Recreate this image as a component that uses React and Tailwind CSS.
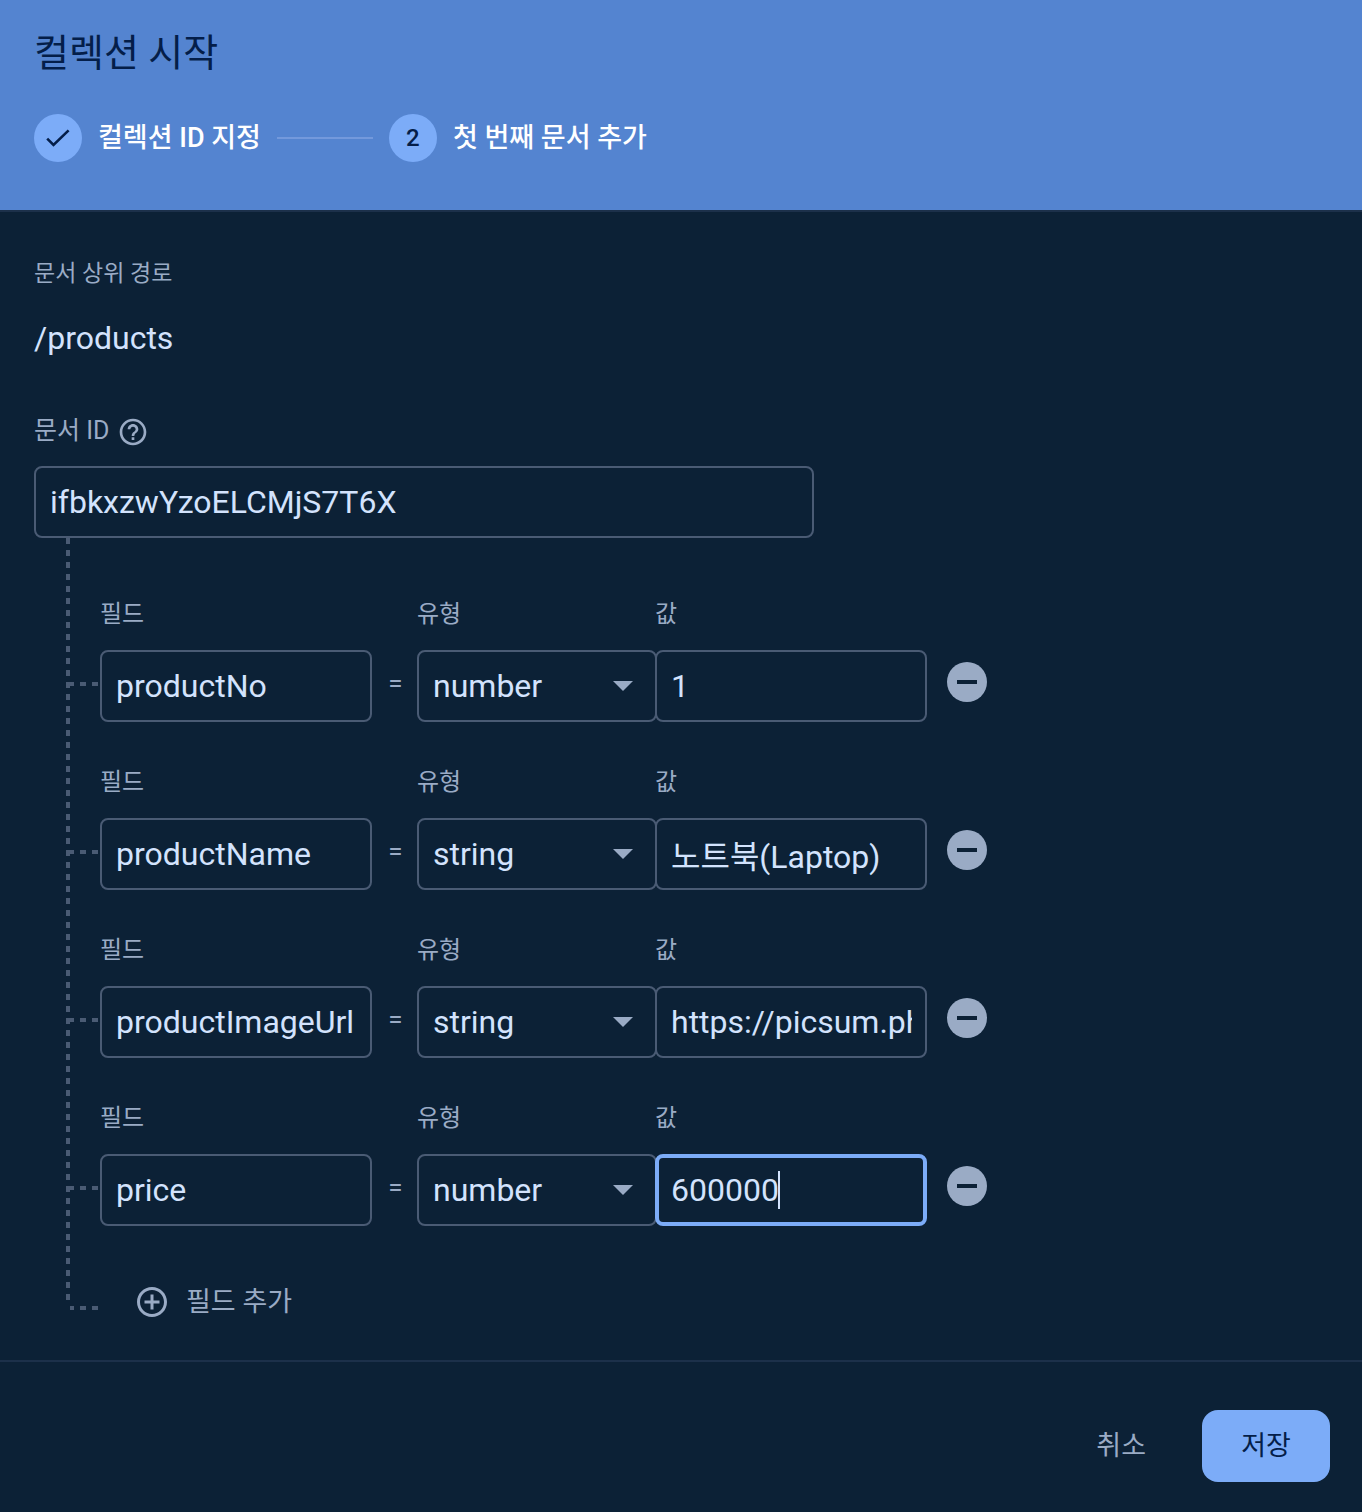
import React, { useState } from 'react';

const initialFields = [
    { id: 1, name: 'productNo', type: 'number', value: '1' },
    { id: 2, name: 'productName', type: 'string', value: '노트북(Laptop)' },
    { id: 3, name: 'productImageUrl', type: 'string', value: 'https://picsum.photos/200' },
    { id: 4, name: 'price', type: 'number', value: '600000', active: true },
];

const fieldTypes = ['string', 'number', 'boolean', 'map', 'array', 'null', 'timestamp', 'geopoint', 'reference'];

const inputBase = 'block h-[72px] w-full rounded-lg bg-transparent text-[32px] leading-[64px] text-[#d3e3fd] outline-none';

const Branch = () => (
    <div className="h-1 w-7 bg-[repeating-linear-gradient(to_right,#4a5b74_0px,#4a5b74_4px,transparent_4px,transparent_10px,#4a5b74_10px,#4a5b74_12px)]"></div>
);

const StepBadge = ({ children }) => (
    <span className="flex h-12 w-12 shrink-0 items-center justify-center rounded-full bg-[#7cacf8] text-2xl font-medium text-[#041e49]">
        {children}
    </span>
);

const FieldRow = ({ field, onChange, onRemove }) => {
    const nameId = `field-name-${field.id}`;
    const typeId = `field-type-${field.id}`;
    const valueId = `field-value-${field.id}`;

    return (
        <div className="grid grid-cols-[30px_minmax(0,272px)_45px_minmax(0,238px)_minmax(0,272px)_60px] items-start gap-y-5">
            {/* Labels */}
            <label htmlFor={nameId} className="col-start-2 text-2xl leading-8">필드</label>
            <label htmlFor={typeId} className="col-start-4 text-2xl leading-8">유형</label>
            <label htmlFor={valueId} className="col-start-5 text-2xl leading-8">값</label>

            {/* Controls */}
            <div className="col-start-1 flex h-[68px] items-center">
                <Branch />
            </div>
            <input
                id={nameId}
                type="text"
                value={field.name}
                onChange={(e) => onChange(field.id, { name: e.target.value })}
                className={`${inputBase} border-2 border-[#4a5b74] px-3.5`}
            />
            <span className="flex h-[66px] items-center justify-center pl-0.5 text-[26px]">=</span>
            <div className="relative -mr-0.5">
                <select
                    id={typeId}
                    value={field.type}
                    onChange={(e) => onChange(field.id, { type: e.target.value })}
                    className={`${inputBase} appearance-none border-2 border-[#4a5b74] px-3.5`}
                >
                    {fieldTypes.map((type) => (
                        <option key={type} value={type} className="bg-[#0c2136]">{type}</option>
                    ))}
                </select>
                <svg viewBox="0 0 20 10" className="pointer-events-none absolute top-[31px] right-6 h-2.5 w-5 fill-[#9aabc5]" aria-hidden="true">
                    <path d="M0 0h20L10 10z" />
                </svg>
            </div>
            <div className="relative">
                <input
                    id={valueId}
                    type="text"
                    value={field.value}
                    onChange={(e) => onChange(field.id, { value: e.target.value })}
                    className={`${inputBase} ${field.active ? 'border-4 border-[#7cacf8] px-3 caret-transparent' : 'border-2 border-[#4a5b74] pr-[13px] pl-3.5'}`}
                />
                {field.active && <span className="absolute top-[17px] left-[123px] h-[38px] w-0.5 bg-[#d3e3fd]"></span>}
            </div>
            <button type="button" onClick={() => onRemove(field.id)} aria-label="필드 삭제" className="flex h-16 items-center justify-end">
                <svg viewBox="0 0 40 40" className="h-10 w-10" aria-hidden="true">
                    <circle cx="20" cy="20" r="20" fill="#9aabc5" />
                    <path d="M10 18h20v4H10z" fill="#0c2136" />
                </svg>
            </button>
        </div>
    );
};

const App = () => {
    const [documentId, setDocumentId] = useState('ifbkxzwYzoELCMjS7T6X');
    const [fields, setFields] = useState(initialFields);

    const handleChange = (id, patch) => {
        setFields(fields.map((field) => (field.id === id ? { ...field, ...patch } : field)));
    };

    const handleRemove = (id) => {
        setFields(fields.filter((field) => field.id !== id));
    };

    const handleAdd = () => {
        setFields([...fields, { id: Date.now(), name: '', type: 'string', value: '' }]);
    };

    return (
        <div className="flex min-h-screen flex-col bg-[#0c2136] font-[Roboto,'Noto_Sans_CJK_KR',sans-serif] text-[#9aabc5]">

            {/* Header with stepper */}
            <header className="border-b-2 border-[#1c304a] bg-[#5484d0] bg-clip-padding px-[34px] pt-[25px] pb-12">
                <h1 className="text-[38px] leading-[56px] text-[#041e49]">컬렉션 시작</h1>
                <ol className="mt-[33px] flex items-center gap-4 text-[27px] leading-[48px] font-medium text-white">
                    <li className="flex items-center gap-4">
                        <StepBadge>
                            <svg viewBox="0 0 24 18" className="h-[18px] w-6" fill="none" stroke="currentColor" strokeWidth="2.6" aria-hidden="true">
                                <path d="M1.2 9.6l6.3 6.3L22.6 1.4" />
                            </svg>
                        </StepBadge>
                        컬렉션 ID 지정
                    </li>
                    <li className="h-0.5 w-24 bg-[#7399dc]" aria-hidden="true"></li>
                    <li className="flex items-center gap-4">
                        <StepBadge>2</StepBadge>
                        첫 번째 문서 추가
                    </li>
                </ol>
            </header>

            {/* Document form */}
            <main className="flex-1 px-[34px] pt-[46px] pb-9">
                <p className="text-[23px] leading-8">문서 상위 경로</p>
                <p className="mt-7 text-[32px] leading-10 text-[#d3e3fd]">/products</p>

                <div className="mt-14 flex items-center gap-2">
                    <label htmlFor="document-id" className="text-[25px] leading-8">문서 ID</label>
                    <svg viewBox="0 0 24 24" className="mt-0.5 h-8 w-8 fill-current" aria-hidden="true">
                        <path d="M11 18h2v-2h-2v2zm1-16C6.48 2 2 6.48 2 12s4.48 10 10 10 10-4.48 10-10S17.52 2 12 2zm0 18c-4.41 0-8-3.59-8-8s3.59-8 8-8 8 3.59 8 8-3.59 8-8 8zm0-14c-2.21 0-4 1.79-4 4h2c0-1.1.9-2 2-2s2 .9 2 2c0 2-3 1.75-3 5h2c0-2.25 3-2.5 3-5 0-2.21-1.79-4-4-4z" />
                    </svg>
                </div>
                <input
                    id="document-id"
                    type="text"
                    value={documentId}
                    onChange={(e) => setDocumentId(e.target.value)}
                    className={`${inputBase} mt-[18px] max-w-[780px] border-2 border-[#4a5b74] px-3.5`}
                />

                <div className="ml-8 flex">
                    {/* Trunk of the field tree */}
                    <div className="mb-[22px] w-1 shrink-0 bg-[repeating-linear-gradient(to_bottom,#4a5b74_0px,#4a5b74_6px,transparent_6px,transparent_12px)]"></div>
                    <div className="flex min-w-0 flex-1 flex-col gap-11 pt-[60px]">
                        {fields.map((field) => (
                            <FieldRow key={field.id} field={field} onChange={handleChange} onRemove={handleRemove} />
                        ))}
                        <div className="mt-2.5 flex items-center">
                            <div className="pt-3">
                                <Branch />
                            </div>
                            <button type="button" onClick={handleAdd} className="ml-9 flex items-center gap-4 text-[27px] leading-[44px]">
                                <svg viewBox="0 0 24 24" className="h-9 w-9 fill-current" aria-hidden="true">
                                    <path d="M13 7h-2v4H7v2h4v4h2v-4h4v-2h-4V7zm-1-5C6.48 2 2 6.48 2 12s4.48 10 10 10 10-4.48 10-10S17.52 2 12 2zm0 18c-4.41 0-8-3.59-8-8s3.59-8 8-8 8 3.59 8 8-3.59 8-8 8z" />
                                </svg>
                                필드 추가
                            </button>
                        </div>
                    </div>
                </div>
            </main>

            {/* Actions */}
            <footer className="flex justify-end gap-4 border-t-2 border-[#1c304a] px-8 pt-12 pb-[30px] text-[27px]">
                <button type="button" className="h-[72px] rounded-2xl px-10">취소</button>
                <button type="submit" className="h-[72px] w-32 rounded-2xl bg-[#7cacf8] text-[#041e49]">저장</button>
            </footer>
        </div>
    );
};

export default App;
